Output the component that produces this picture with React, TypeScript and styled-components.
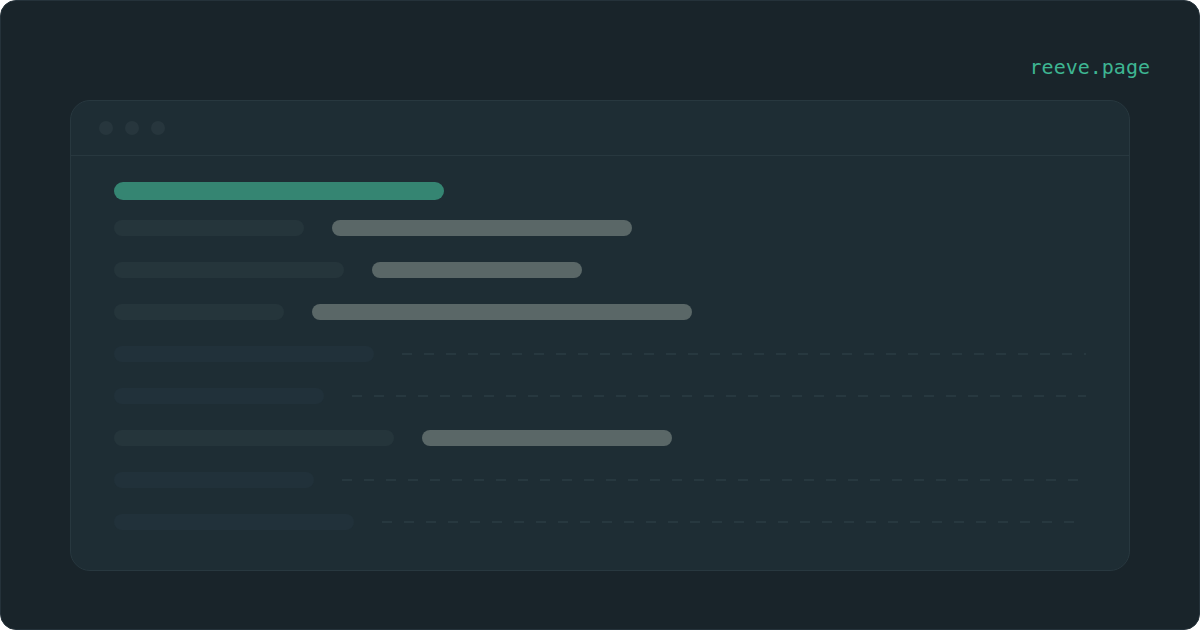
import React from "react";
import styled, { createGlobalStyle } from "styled-components";

const GlobalStyle = createGlobalStyle`
  html, body { margin: 0; padding: 0; background: #ffffff; }
  #root { width: 1200px; height: 630px; }
`;

const Frame = styled.div`
  box-sizing: border-box;
  width: 1200px;
  height: 630px;
  background: #19242a;
  border: 1px solid #25323a;
  border-radius: 16px;
  display: flex;
  flex-direction: column;
  overflow: hidden;
`;

const TopBar = styled.div`
  box-sizing: border-box;
  height: 99px;
  display: flex;
  justify-content: flex-end;
  align-items: flex-start;
  padding: 54px 49px 0 0;
`;

const Brand = styled.span`
  font-family: "DejaVu Sans Mono", "Liberation Mono", monospace;
  font-size: 20px;
  line-height: 24px;
  color: #3eb692;
`;

const Window = styled.div`
  box-sizing: border-box;
  margin: 0 69px;
  height: 471px;
  background: #1e2d34;
  border: 1px solid #28383f;
  border-radius: 20px;
  display: flex;
  flex-direction: column;
`;

const WindowHeader = styled.div`
  height: 54px;
  border-bottom: 1px solid #28383f;
  display: flex;
  align-items: center;
  gap: 12px;
  padding-left: 28px;
`;

const Dot = styled.span`
  width: 14px;
  height: 14px;
  border-radius: 50%;
  background: #27363d;
`;

const Body = styled.div`
  padding: 26px 43px 0 43px;
  display: flex;
  flex-direction: column;
`;

const Title = styled.div`
  width: 330px;
  height: 18px;
  border-radius: 9px;
  background: #358572;
`;

const List = styled.div`
  margin-top: 20px;
  display: flex;
  flex-direction: column;
  gap: 26px;
`;

const Row = styled.div`
  height: 16px;
  display: flex;
  align-items: center;
  gap: 28px;
`;

const Label = styled.div<{ $filled: boolean }>`
  height: 16px;
  border-radius: 8px;
  flex: none;
  background: ${(p) => (p.$filled ? "#25353b" : "#21313a")};
`;

const Value = styled.div`
  height: 16px;
  border-radius: 8px;
  flex: none;
  background: #5a6767;
`;

const Dashes = styled.div`
  flex: 1;
  height: 2px;
  background: repeating-linear-gradient(
    to right,
    #27383f 0px,
    #27383f 10px,
    transparent 10px,
    transparent 22px
  );
`;

const rows: { label: number; value?: number }[] = [
  { label: 190, value: 300 },
  { label: 230, value: 210 },
  { label: 170, value: 380 },
  { label: 260 },
  { label: 210 },
  { label: 280, value: 250 },
  { label: 200 },
  { label: 240 },
];

export default function App() {
  return (
    <>
      <GlobalStyle />
      <Frame>
        <TopBar>
          <Brand>reeve.page</Brand>
        </TopBar>
        <Window>
          <WindowHeader>
            <Dot />
            <Dot />
            <Dot />
          </WindowHeader>
          <Body>
            <Title />
            <List>
              {rows.map((r, i) => (
                <Row key={i}>
                  <Label $filled={r.value !== undefined} style={{ width: r.label }} />
                  {r.value !== undefined ? (
                    <Value style={{ width: r.value }} />
                  ) : (
                    <Dashes />
                  )}
                </Row>
              ))}
            </List>
          </Body>
        </Window>
      </Frame>
    </>
  );
}
